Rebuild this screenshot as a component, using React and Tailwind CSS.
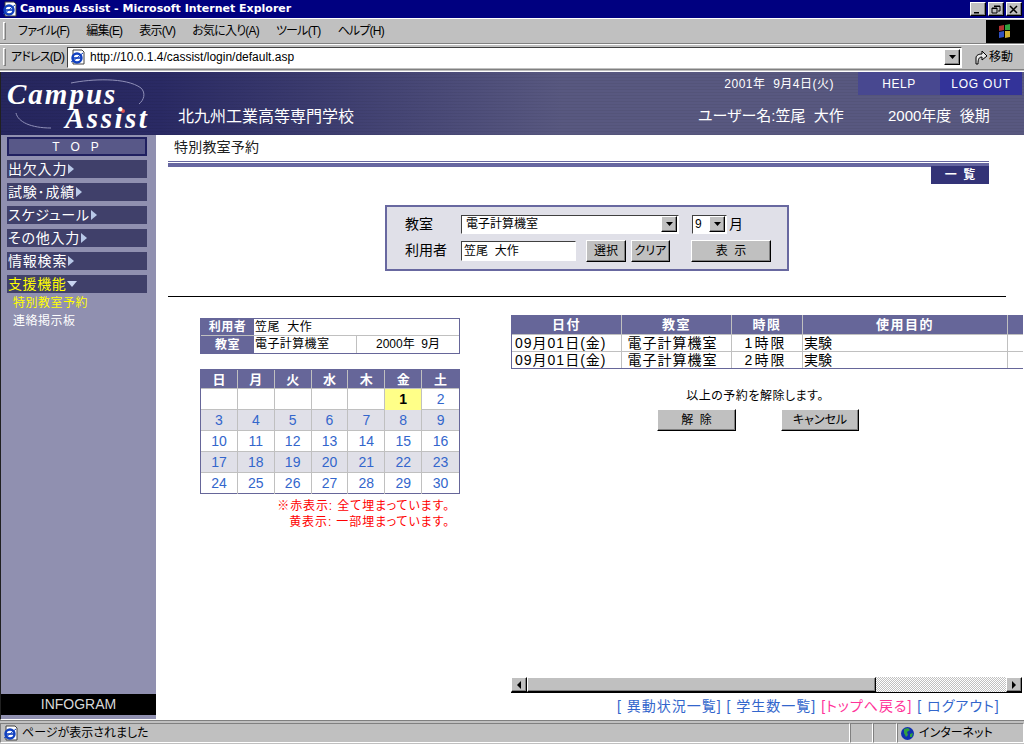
const font = "font-['Liberation_Sans','Noto_Sans_CJK_JP',sans-serif] [font-feature-settings:'palt']";
const raised = "border border-t-white border-l-white border-r-black border-b-black bg-[#c0c0c0] shadow-[inset_-1px_-1px_0_#808080]";
const sunken = "border border-t-[#404040] border-l-[#404040] border-r-white border-b-white";

const menus = ["ファイル(F)", "編集(E)", "表示(V)", "お気に入り(A)", "ツール(T)", "ヘルプ(H)"];
const sideMenus = ["出欠入力", "試験･成績", "スケジュール", "その他入力", "情報検索"];
const weekDays = ["日", "月", "火", "水", "木", "金", "土"];
const weeks = [
    ["", "", "", "", "", "1", "2"],
    ["3", "4", "5", "6", "7", "8", "9"],
    ["10", "11", "12", "13", "14", "15", "16"],
    ["17", "18", "19", "20", "21", "22", "23"],
    ["24", "25", "26", "27", "28", "29", "30"],
];
const reservations = [
    { period: "1時限" },
    { period: "2時限" },
];

function IeIcon() {
    return (
        <svg width="16" height="16" viewBox="0 0 16 16" className="shrink-0">
            <path d="M3 1h9l2 2v12H3z" fill="#fff" stroke="#404040" strokeWidth="1" />
            <circle cx="7" cy="9" r="4.5" fill="none" stroke="#1040c0" strokeWidth="2.4" />
            <path d="M3 9h8" stroke="#1040c0" strokeWidth="1.6" />
            <path d="M1 13C4 12 10 6 13 4" stroke="#1040c0" strokeWidth="1" fill="none" />
        </svg>
    );
}

function WinButton({ children }) {
    return (
        <div className={`w-4 h-[14px] flex items-center justify-center ${raised}`}>
            <svg width="10" height="9" viewBox="0 0 10 9">{children}</svg>
        </div>
    );
}

function DropArrow({ className = "" }) {
    return (
        <div className={`w-4 h-4 flex items-center justify-center ${raised} ${className}`}>
            <svg width="7" height="4" viewBox="0 0 7 4"><path d="M0 0h7L3.5 4z" fill="#000" /></svg>
        </div>
    );
}

function Grip() {
    return <div className="w-[3px] h-[18px] ml-[3px] shrink-0 border border-t-white border-l-white border-r-[#808080] border-b-[#808080]" />;
}

function BrowserChrome() {
    return (
        <>
            <div className="h-[18px] bg-[#000080] flex items-center pl-[2px] pr-[2px] shrink-0">
                <IeIcon />
                <span className="ml-[2px] text-white text-[11px] font-bold font-['DejaVu_Sans',sans-serif]">Campus Assist - Microsoft Internet Explorer</span>
                <div className="ml-auto flex">
                    <WinButton><path d="M1 7h5v1.500H1z" /></WinButton>
                    <div className="w-[2px]" />
                    <WinButton><path d="M3 1h6v5H7M1 3h5v5H1zM1 3.500h5M3 1.500h6" fill="none" stroke="#000" /></WinButton>
                    <div className="w-[2px]" />
                    <WinButton><path d="M1 1l7 7M8 1L1 8" stroke="#000" strokeWidth="1.500" /></WinButton>
                </div>
            </div>
            <div className="h-[26px] border-t border-t-white border-b border-b-[#808080] flex items-center shrink-0">
                <Grip />
                <div className="flex ml-[12px] gap-[17px] text-[12px] tracking-[-0.8px] text-black">
                    {menus.map((m) => <span key={m}>{m}</span>)}
                </div>
                <div className="ml-auto w-[38px] h-[23px] bg-black flex items-center justify-center">
                    <svg width="14" height="14" viewBox="0 0 14 14">
                        <path d="M1 2l5-1v5l-5 1z" fill="#b03030" />
                        <path d="M7 1l5-1v6l-5 0z" fill="#30a040" />
                        <path d="M1 8l5-1v6l-5 1z" fill="#3050c0" />
                        <path d="M7 7h5v6l-5 1z" fill="#d0b030" />
                    </svg>
                </div>
            </div>
            <div className="h-[25px] border-t border-t-white flex items-center shrink-0">
                <Grip />
                <span className="ml-[5px] w-[56px] text-[12px] tracking-[-0.8px] text-black whitespace-nowrap">アドレス(D)</span>
                <div className={`w-[895px] h-[21px] bg-white flex items-center pl-[2px] pr-[1px] ${sunken}`}>
                    <IeIcon />
                    <span className="ml-[4px] text-[12px] text-black">http://10.0.1.4/cassist/login/default.asp</span>
                    <DropArrow className="ml-auto" />
                </div>
                <div className="ml-[12px] flex items-center gap-[1px] text-[12px] text-black">
                    <svg width="14" height="15" viewBox="0 0 14 15">
                        <path d="M2 14V8c0-3 3-4 6-4V1l5 5-5 4V7C5 7 4 9 4 14z" fill="#e8e8e8" stroke="#000" />
                    </svg>
                    移動
                </div>
            </div>
            <div className="h-[3px] border-t border-t-[#808080] border-b border-b-white shrink-0" />
        </>
    );
}

function Logo() {
    return (
        <div className="relative w-[155px] h-full shrink-0 text-white font-['Liberation_Serif',serif] font-bold italic">
            <svg width="155" height="63" viewBox="0 0 155 63" className="absolute left-0 top-0">
                <path d="M70 11C90 7 125 5 140 16C145 21 143 28 138 32" fill="none" stroke="#9090b8" strokeWidth="1" />
                <path d="M15 41C17 50 30 56 50 56" fill="none" stroke="#9090b8" strokeWidth="1" />
                <circle cx="122" cy="39" r="2" fill="#e05050" />
            </svg>
            <div className="absolute left-[6px] top-[10px] text-[29px] leading-[24px] tracking-[2px]">Campus</div>
            <div className="absolute left-[64px] top-[34px] text-[29px] leading-[24px] tracking-[2.5px]">Assist</div>
        </div>
    );
}

function Header() {
    return (
        <div className="h-[63px] flex shrink-0 bg-[repeating-linear-gradient(180deg,transparent_0,transparent_2px,rgba(0,0,0,0.05)_2px,rgba(0,0,0,0.05)_3px),linear-gradient(90deg,#26265e_0,#2a2a64_160px,#585880_560px,#585880_100%)]">
            <Logo />
            <div className="ml-[22px] mt-[33px] text-[16px] leading-[24px] text-white">北九州工業高等専門学校</div>
            <div className="ml-auto w-[300px] mr-[2px] flex flex-col text-white">
                <div className="flex h-[23px]">
                    <span className="w-[136px] pt-[3px] text-[12px] leading-[18px] text-right tracking-[0.5px] -ml-[24px] mr-[24px] whitespace-pre">2001年  9月4日(火)</span>
                    <div className="w-[82px] bg-[#484890] text-[12px] tracking-[0.5px] flex items-center justify-center">HELP</div>
                    <div className="w-[82px] bg-[#333399] text-[12px] tracking-[0.8px] flex items-center justify-center">LOG OUT</div>
                </div>
                <div className="flex mt-[11px] -ml-[24px] text-[15px] leading-[20px] whitespace-pre">
                    <span className="w-[190px]">ユーザー名:笠尾  大作</span>
                    <span>2000年度  後期</span>
                </div>
            </div>
        </div>
    );
}

function Sidebar() {
    return (
        <div className="w-[155px] flex flex-col shrink-0 bg-[#9090b0]">
            <div className="ml-[6px] mr-[9px] mt-[2px] h-[19px] bg-[#585888] border-2 border-[#202060] text-white text-[12px] tracking-[11px] flex items-center justify-center pl-[8px]">TOP</div>
            <div className="mt-[4px] flex flex-col gap-[5px] ml-[6px] mr-[9px]">
                {sideMenus.map((m) => (
                    <div key={m} className="h-[18px] bg-[#40406a] text-white text-[14px] leading-[18px] flex items-center pl-[1px] tracking-[0.8px] whitespace-nowrap">
                        {m}
                        <svg width="6" height="10" viewBox="0 0 6 10" className="ml-[1px]"><path d="M0 0l6 5-6 5z" fill="#b8c8e8" /></svg>
                    </div>
                ))}
                <div className="h-[18px] bg-[#40406a] text-[#ffff00] text-[14px] leading-[18px] flex items-center pl-[1px] tracking-[0.6px]">
                    支援機能
                    <svg width="10" height="6" viewBox="0 0 10 6" className="ml-[1px]"><path d="M0 0h10L5 6z" fill="#c8d4f0" /></svg>
                </div>
            </div>
            <div className="ml-[12px] mt-[1px] text-[12px] leading-[18px] tracking-[0.5px]">
                <div className="text-[#ffff00]">特別教室予約</div>
                <div className="text-white">連絡掲示板</div>
            </div>
            <div className="mt-auto mb-[4px] h-[21px] bg-black text-[#d8d8d8] text-[14px] flex items-center justify-center">INFOGRAM</div>
        </div>
    );
}

function FilterPanel() {
    return (
        <div className="ml-[229px] mt-[21px] w-[404px] h-[66px] bg-[#e0e0e8] border-2 border-[#6868a0] pl-[18px] pt-[7px] text-[14px] text-black">
            <div className="flex items-center h-[20px]">
                <span className="w-[56px]">教室</span>
                <div className={`w-[218px] h-[19px] bg-white flex items-center pl-[4px] pr-[1px] text-[12px] ${sunken}`}>
                    電子計算機室
                    <DropArrow className="ml-auto" />
                </div>
                <div className="w-[13px]" />
                <div className={`w-[35px] h-[19px] bg-white flex items-center pl-[2px] pr-[1px] text-[12px] ${sunken}`}>
                    9
                    <DropArrow className="ml-auto" />
                </div>
                <span className="ml-[2px]">月</span>
            </div>
            <div className="flex items-center h-[23px] mt-[5px]">
                <span className="w-[56px] whitespace-nowrap">利用者</span>
                <div className={`w-[115px] h-[20px] bg-white flex items-center pl-[2px] text-[12px] whitespace-pre ${sunken}`}>笠尾  大作</div>
                <button className={`ml-[10px] w-[40px] h-[22px] text-[12px] ${raised}`}>選択</button>
                <button className={`ml-[5px] w-[39px] h-[22px] text-[12px] ${raised}`}>クリア</button>
                <button className={`ml-[21px] w-[80px] h-[22px] text-[12px] whitespace-pre ${raised}`}>表  示</button>
            </div>
        </div>
    );
}

function InfoTable() {
    const label = "w-[53px] bg-[#666699] text-white font-bold text-[12px] flex items-center justify-center tracking-[0.5px]";
    return (
        <div className="w-[260px] border border-[#666699] text-[12px] text-black">
            <div className="flex h-[17px] border-b border-[#c0c0c0]">
                <div className={label}>利用者</div>
                <div className="pl-[1px] leading-[17px] whitespace-pre tracking-[0.4px]">笠尾  大作</div>
            </div>
            <div className="flex h-[17px]">
                <div className={label}>教室</div>
                <div className="w-[103px] pl-[1px] leading-[17px] border-r border-[#c0c0c0] tracking-[0.4px] whitespace-nowrap">電子計算機室</div>
                <div className="flex-1 text-center leading-[17px] whitespace-pre">2000年  9月</div>
            </div>
        </div>
    );
}

function Calendar() {
    return (
        <div className="w-[260px] mt-[15px] border border-[#666699] text-[14px]">
            <div className="grid grid-cols-7 h-[18px] bg-[#666699] text-white font-bold">
                {weekDays.map((d) => (
                    <div key={d} className="flex items-center justify-center text-[13px] border-r border-[#c0c0c0] last:border-r-0">{d}</div>
                ))}
            </div>
            {weeks.map((week, i) => (
                <div key={i} className={`grid grid-cols-7 h-[21px] border-t border-[#c0c0c0] ${i % 2 === 1 ? "bg-[#e0e0e8]" : "bg-white"}`}>
                    {week.map((day, j) => (
                        <div
                            key={j}
                            className={`flex items-center justify-center border-r border-[#c0c0c0] last:border-r-0 ${day === "1" ? "bg-[#ffff88] text-black font-bold" : "text-[#3366cc]"}`}
                        >
                            {day}
                        </div>
                    ))}
                </div>
            ))}
        </div>
    );
}

function ReservationTable() {
    const cols = "grid grid-cols-[110px_110px_71px_205px_1fr]";
    return (
        <div className="w-[512px] border-l border-b border-[#666699] text-[14px] text-black">
            <div className={`${cols} h-[19px] bg-[#666699] text-white font-bold`}>
                {["日付", "教室", "時限", "使用目的", ""].map((h, i) => (
                    <div key={i} className="flex items-center justify-center text-[13px] border-r border-[#c0c0c0] last:border-r-0 tracking-[1.5px]">{h}</div>
                ))}
            </div>
            {reservations.map((r, i) => (
                <div key={i} className={`${cols} h-[17px] leading-[16px] border-t border-[#c0c0c0]`}>
                    <div className="pl-[3px] border-r border-[#c0c0c0] whitespace-pre tracking-[1px]">09月01日(金)</div>
                    <div className="pr-[8px] text-center border-r border-[#c0c0c0] whitespace-nowrap tracking-[1px]">電子計算機室</div>
                    <div className="pr-[3px] text-center border-r border-[#c0c0c0] tracking-[2px]">{r.period}</div>
                    <div className="pl-[1px] border-r border-[#c0c0c0]">実験</div>
                    <div />
                </div>
            ))}
        </div>
    );
}

function ScrollBar() {
    return (
        <div className="ml-[355px] h-[16px] w-[511px] flex items-stretch border-b border-black shrink-0 bg-[repeating-conic-gradient(#c0c0c0_0_25%,#ffffff_0_50%)] bg-[length:2px_2px]">
            <div className={`w-[16px] flex items-center justify-center ${raised}`}>
                <svg width="4" height="8" viewBox="0 0 4 8"><path d="M4 0v8L0 4z" /></svg>
            </div>
            <div className={`w-[349px] ${raised}`} />
            <div className={`w-[16px] ml-auto flex items-center justify-center ${raised}`}>
                <svg width="4" height="8" viewBox="0 0 4 8"><path d="M0 0v8l4-4z" /></svg>
            </div>
        </div>
    );
}

function MainContent() {
    return (
        <div className="flex-1 min-w-0 bg-white flex flex-col overflow-hidden">
            <div className="ml-[18px] mt-[3px] text-[14px] leading-[18px] text-[#202020] tracking-[0.2px]">特別教室予約</div>
            <div className="ml-[12px] mt-[5px] w-[821px] border-t border-[#6666a0] h-[5px] shrink-0">
                <div className="mt-[1px] h-[4px] bg-[#6666a0]" />
            </div>
            <div className="ml-[775px] w-[58px] h-[18px] bg-[#333377] text-white text-[12px] font-bold whitespace-pre flex items-center justify-center shrink-0">一  覧</div>
            <FilterPanel />
            <div className="ml-[12px] mt-[25px] w-[838px] h-px bg-black shrink-0" />
            <div className="flex mt-[18px] ml-[44px]">
                <div className="w-[260px] mt-[3px]">
                    <InfoTable />
                    <Calendar />
                    <div className="text-[#ff0000] text-[12px] leading-[16px] mt-[4px] text-right pr-[10px] tracking-[0.9px]">
                        <div>※赤表示: 全て埋まっています。</div>
                        <div>黄表示: 一部埋まっています。</div>
                    </div>
                </div>
                <div className="ml-[51px] flex flex-col">
                    <ReservationTable />
                    <div className="mt-[19px] text-center pr-[24px] text-[12px] leading-[16px] text-black tracking-[0.5px]">以上の予約を解除します。</div>
                    <div className="flex mt-[5px] ml-[146px] gap-[45px]">
                        <button className={`w-[79px] h-[22px] text-[12px] whitespace-pre ${raised}`}>解  除</button>
                        <button className={`w-[78px] h-[22px] text-[12px] ${raised}`}>キャンセル</button>
                    </div>
                </div>
            </div>
            <div className="mt-auto">
                <ScrollBar />
                <div className="h-[26px] pl-[461px] flex items-center text-[14px] leading-[20px] text-[#3366cc] whitespace-pre tracking-[1px]">
                    [ 異動状況一覧] [ 学生数一覧] <span className="text-[#ff3399]">[トップへ戻る] </span>[ ログアウト]
                </div>
            </div>
        </div>
    );
}

function StatusBar() {
    const cell = "border border-t-[#808080] border-l-[#808080] border-r-white border-b-white";
    return (
        <div className="h-[24px] border-t border-[#808080] flex items-center shrink-0 pt-px">
            <div className={`flex-1 h-[20px] flex items-center pl-[2px] text-[12px] text-black ${cell}`}>
                <IeIcon />
                <span className="ml-[3px]">ページが表示されました</span>
            </div>
            <div className={`w-[23px] h-[20px] ${cell}`} />
            <div className={`w-[24px] h-[20px] ${cell}`} />
            <div className={`w-[127px] h-[20px] flex items-center pl-[2px] text-[12px] text-black ${cell}`}>
                <svg width="15" height="15" viewBox="0 0 15 15">
                    <circle cx="7.500" cy="7.500" r="6.500" fill="#1030b0" />
                    <path d="M4 3l4-1 2 2-3 2 1 3-2 2-2-4zM10 8l3-1-1 4-2 0z" fill="#30a040" />
                </svg>
                <span className="ml-[4px]">インターネット</span>
            </div>
        </div>
    );
}

export default function App() {
    return (
        <div className={`w-[1024px] h-[744px] bg-[#c0c0c0] flex flex-col overflow-hidden ${font}`}>
            <BrowserChrome />
            <div className="flex-1 min-h-0 flex flex-col border-l border-l-[#202020] border-b border-b-white">
                <Header />
                <div className="flex-1 min-h-0 flex">
                    <Sidebar />
                    <MainContent />
                </div>
            </div>
            <StatusBar />
        </div>
    );
}
